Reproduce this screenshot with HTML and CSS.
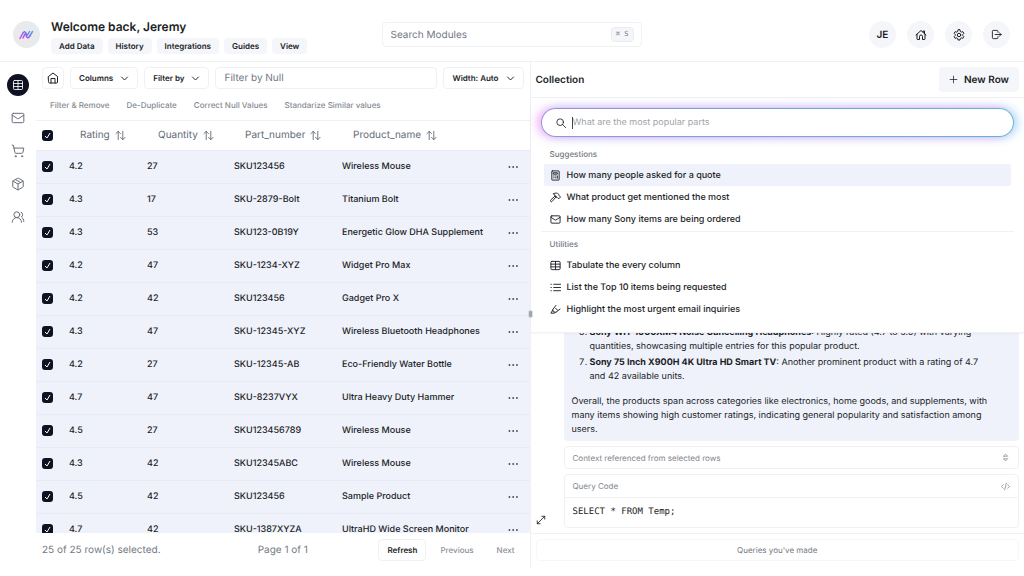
FILE: index.html
```html
<!DOCTYPE html>
<html lang="en">
<head>
<meta charset="utf-8">
<meta name="viewport" content="width=device-width, initial-scale=1">
<title>Collection</title>
<link rel="stylesheet" href="styles.css">
</head>
<body>
<svg class="defs" aria-hidden="true">
  <symbol id="i-table" viewBox="0 0 24 24"><rect x="3" y="3" width="18" height="18" rx="2"/><path d="M3 9h18M3 15h18M12 3v18"/></symbol>
  <symbol id="i-grid" viewBox="0 0 24 24"><rect x="2" y="3" width="20" height="18" rx="2"/><path d="M2 9h20M2 15h20M12 3v18"/></symbol>
  <symbol id="i-mail" viewBox="0 0 24 24"><rect x="2" y="4" width="20" height="16" rx="2"/><path d="m2 7 8.900 6a2 2 0 0 0 2.200 0L22 7"/></symbol>
  <symbol id="i-cart" viewBox="0 0 24 24"><circle cx="8" cy="21" r="1"/><circle cx="19" cy="21" r="1"/><path d="M2 2h2l2.700 12.400a2 2 0 0 0 2 1.600h9.700a2 2 0 0 0 2-1.600L22 7H5"/></symbol>
  <symbol id="i-box" viewBox="0 0 24 24"><path d="M21 8a2 2 0 0 0-1-1.700l-7-4a2 2 0 0 0-2 0l-7 4A2 2 0 0 0 3 8v8a2 2 0 0 0 1 1.700l7 4a2 2 0 0 0 2 0l7-4a2 2 0 0 0 1-1.700ZM3.300 7 12 12l8.700-5M12 22V12M7.500 4.300l9 5.100"/></symbol>
  <symbol id="i-users" viewBox="0 0 24 24"><circle cx="10" cy="8" r="5"/><path d="M2 21a8 8 0 0 1 16 0M22 20c0-3.400-2-6.500-4-8a5 5 0 0 0-.5-8.300"/></symbol>
  <symbol id="i-home" viewBox="0 0 24 24"><path d="m3 9 9-7 9 7v11a2 2 0 0 1-2 2H5a2 2 0 0 1-2-2ZM8 22v-9h8v9"/></symbol>
  <symbol id="i-house" viewBox="0 0 24 24"><path d="M2 12 12 3l10 9M16 6V4h3v5M4 10.500V20a1 1 0 0 0 1 1h4v-6a3 3 0 0 1 6 0v6h4a1 1 0 0 0 1-1v-9.500"/></symbol>
  <symbol id="i-gear" viewBox="0 0 24 24"><path d="m10 2-.7 3-2 1.200-3-.9-2 3.400L4.500 11v2l-2.200 2.300 2 3.400 3-.9 2 1.200.7 3h4l.7-3 2-1.200 3 .9 2-3.400-2.200-2.300v-2l2.200-2.300-2-3.400-3 .9-2-1.200-.7-3Z"/><circle cx="12" cy="12" r="3.500"/></symbol>
  <symbol id="i-exit" viewBox="0 0 24 24"><path d="M15 7V5a2 2 0 0 0-2-2H5a2 2 0 0 0-2 2v14a2 2 0 0 0 2 2h8a2 2 0 0 0 2-2v-2M9 12h13M18 8l4 4-4 4"/></symbol>
  <symbol id="i-down" viewBox="0 0 24 24"><path d="m4 8 8 8 8-8"/></symbol>
  <symbol id="i-sort" viewBox="0 0 24 24"><path d="M7 21V3M2 8l5-5 5 5M17 3v18M12 16l5 5 5-5"/></symbol>
  <symbol id="i-plus" viewBox="0 0 24 24"><path d="M12 3v18M3 12h18"/></symbol>
  <symbol id="i-search" viewBox="0 0 24 24"><circle cx="10" cy="10" r="8"/><path d="m16 16 7 7"/></symbol>
  <symbol id="i-calc" viewBox="0 0 24 24"><rect x="4" y="2" width="16" height="20" rx="1"/><path d="M8 6h8v3H8ZM8 13h1M12 13h1M16 13v5M8 17h1M12 17h1"/></symbol>
  <symbol id="i-hammer" viewBox="0 0 24 24"><path d="m14 10-9.500 10.500a2 2 0 0 1-3-3L12 8M8 4c4-3 8-2 11 1l1 3 3 3-4 4-3-3-3-1-3-3c0-2-1-3-2-4Z"/></symbol>
  <symbol id="i-list" viewBox="0 0 24 24"><path d="M8 5h15M8 12h15M8 19h15M2 5h1M2 12h1M2 19h1"/></symbol>
  <symbol id="i-marker" viewBox="0 0 24 24"><path d="m13 3-7 9 1 5 6 1 9-7M6 13l-4 7h8l2-2M12 9l5 5"/></symbol>
  <symbol id="i-updown" viewBox="0 0 24 24"><path d="m7 8 5-5 5 5ZM7 16l5 5 5-5Z"/></symbol>
  <symbol id="i-code" viewBox="0 0 24 24"><path d="M6 7l-5 5 5 5M18 7l5 5-5 5M14 3l-4 18"/></symbol>
  <symbol id="i-expand" viewBox="0 0 24 24"><path d="M3 21 21 3M14 3h7v7M3 14v7h7"/></symbol>
  <symbol id="i-dots" viewBox="0 0 24 24"><path d="M3 12h1M12 12h1M21 12h1"/></symbol>
</svg>

<header class="topbar">
  <div class="brand">
    <span class="logo">
      <svg viewBox="0 0 30 20" aria-hidden="true">
        <defs><linearGradient id="lg" x1="0" y1="1" x2="1" y2="0"><stop offset="0" stop-color="#e044f0"/><stop offset=".5" stop-color="#8a60e4"/><stop offset="1" stop-color="#48aef0"/></linearGradient></defs>
        <path d="M2 17 8 6q3-5 6 0l1 7q2 5 6 0l6-10M8 16l4-8M17 10l4-7" fill="none" stroke="url(#lg)" stroke-width="3" stroke-linecap="round" stroke-linejoin="round"/>
      </svg>
    </span>
    <div>
      <h1 class="title">Welcome back, Jeremy</h1>
      <nav class="chips">
        <button class="chip">Add Data</button>
        <button class="chip">History</button>
        <button class="chip">Integrations</button>
        <button class="chip">Guides</button>
        <button class="chip">View</button>
      </nav>
    </div>
  </div>
  <div class="modules">
    <input class="modules-input" type="text" aria-label="Search Modules" placeholder="Search Modules">
    <kbd class="kbd">⌘ S</kbd>
  </div>
  <div class="account">
    <button class="round">JE</button>
    <button class="round" aria-label="Home"><svg class="ico s12"><use href="#i-house"/></svg></button>
    <button class="round" aria-label="Settings"><svg class="ico s12"><use href="#i-gear"/></svg></button>
    <button class="round" aria-label="Log out"><svg class="ico s11"><use href="#i-exit"/></svg></button>
  </div>
</header>

<div class="shell">
  <nav class="rail">
    <button class="rail-btn active" aria-label="Tables"><svg class="ico s12"><use href="#i-table"/></svg></button>
    <button class="rail-btn" aria-label="Mail"><svg class="ico s14"><use href="#i-mail"/></svg></button>
    <button class="rail-btn" aria-label="Orders"><svg class="ico s14"><use href="#i-cart"/></svg></button>
    <button class="rail-btn" aria-label="Products"><svg class="ico s14"><use href="#i-box"/></svg></button>
    <button class="rail-btn" aria-label="Contacts"><svg class="ico s14"><use href="#i-users"/></svg></button>
  </nav>

  <main class="data">
    <div class="toolbar">
      <button class="btn square" aria-label="Home"><svg class="ico s12"><use href="#i-home"/></svg></button>
      <button class="btn">Columns <svg class="ico s9"><use href="#i-down"/></svg></button>
      <button class="btn">Filter by <svg class="ico s9"><use href="#i-down"/></svg></button>
      <input class="filter" type="text" aria-label="Filter by Null" placeholder="Filter by Null">
      <button class="btn">Width: Auto <svg class="ico s9"><use href="#i-down"/></svg></button>
    </div>
    <div class="actions">
      <button class="link">Filter &amp; Remove</button>
      <button class="link">De-Duplicate</button>
      <button class="link">Correct Null Values</button>
      <button class="link">Standarize Similar values</button>
    </div>
    <div class="table-wrap">
      <table class="grid">
        <colgroup><col class="c-check"><col class="c-rating"><col class="c-qty"><col class="c-part"><col><col class="c-more"></colgroup>
        <thead>
          <tr>
            <th><input class="check" type="checkbox" checked aria-label="Select all"></th>
            <th><button class="sort">Rating <svg class="ico s11"><use href="#i-sort"/></svg></button></th>
            <th><button class="sort">Quantity <svg class="ico s11"><use href="#i-sort"/></svg></button></th>
            <th><button class="sort">Part_number <svg class="ico s11"><use href="#i-sort"/></svg></button></th>
            <th><button class="sort">Product_name <svg class="ico s11"><use href="#i-sort"/></svg></button></th>
            <th></th>
          </tr>
        </thead>
        <tbody>
          <tr><td><input class="check" type="checkbox" checked aria-label="Select row"></td><td>4.2</td><td>27</td><td>SKU123456</td><td>Wireless Mouse</td><td><button class="more" aria-label="More"><svg class="ico s10"><use href="#i-dots"/></svg></button></td></tr>
          <tr><td><input class="check" type="checkbox" checked aria-label="Select row"></td><td>4.3</td><td>17</td><td>SKU-2879-Bolt</td><td>Titanium Bolt</td><td><button class="more" aria-label="More"><svg class="ico s10"><use href="#i-dots"/></svg></button></td></tr>
          <tr><td><input class="check" type="checkbox" checked aria-label="Select row"></td><td>4.3</td><td>53</td><td>SKU123-0B19Y</td><td>Energetic Glow DHA Supplement</td><td><button class="more" aria-label="More"><svg class="ico s10"><use href="#i-dots"/></svg></button></td></tr>
          <tr><td><input class="check" type="checkbox" checked aria-label="Select row"></td><td>4.2</td><td>47</td><td>SKU-1234-XYZ</td><td>Widget Pro Max</td><td><button class="more" aria-label="More"><svg class="ico s10"><use href="#i-dots"/></svg></button></td></tr>
          <tr><td><input class="check" type="checkbox" checked aria-label="Select row"></td><td>4.2</td><td>42</td><td>SKU123456</td><td>Gadget Pro X</td><td><button class="more" aria-label="More"><svg class="ico s10"><use href="#i-dots"/></svg></button></td></tr>
          <tr><td><input class="check" type="checkbox" checked aria-label="Select row"></td><td>4.3</td><td>47</td><td>SKU-12345-XYZ</td><td>Wireless Bluetooth Headphones</td><td><button class="more" aria-label="More"><svg class="ico s10"><use href="#i-dots"/></svg></button></td></tr>
          <tr><td><input class="check" type="checkbox" checked aria-label="Select row"></td><td>4.2</td><td>27</td><td>SKU-12345-AB</td><td>Eco-Friendly Water Bottle</td><td><button class="more" aria-label="More"><svg class="ico s10"><use href="#i-dots"/></svg></button></td></tr>
          <tr><td><input class="check" type="checkbox" checked aria-label="Select row"></td><td>4.7</td><td>47</td><td>SKU-8237VYX</td><td>Ultra Heavy Duty Hammer</td><td><button class="more" aria-label="More"><svg class="ico s10"><use href="#i-dots"/></svg></button></td></tr>
          <tr><td><input class="check" type="checkbox" checked aria-label="Select row"></td><td>4.5</td><td>27</td><td>SKU123456789</td><td>Wireless Mouse</td><td><button class="more" aria-label="More"><svg class="ico s10"><use href="#i-dots"/></svg></button></td></tr>
          <tr><td><input class="check" type="checkbox" checked aria-label="Select row"></td><td>4.3</td><td>42</td><td>SKU12345ABC</td><td>Wireless Mouse</td><td><button class="more" aria-label="More"><svg class="ico s10"><use href="#i-dots"/></svg></button></td></tr>
          <tr><td><input class="check" type="checkbox" checked aria-label="Select row"></td><td>4.5</td><td>42</td><td>SKU123456</td><td>Sample Product</td><td><button class="more" aria-label="More"><svg class="ico s10"><use href="#i-dots"/></svg></button></td></tr>
          <tr><td><input class="check" type="checkbox" checked aria-label="Select row"></td><td>4.7</td><td>42</td><td>SKU-1387XYZA</td><td>UltraHD Wide Screen Monitor</td><td><button class="more" aria-label="More"><svg class="ico s10"><use href="#i-dots"/></svg></button></td></tr>
        </tbody>
      </table>
    </div>
    <footer class="pager">
      <span class="selected">25 of 25 row(s) selected.</span>
      <span class="page">Page 1 of 1</span>
      <div class="pager-btns">
        <button class="btn">Refresh</button>
        <button class="btn faded">Previous</button>
        <button class="btn faded">Next</button>
      </div>
    </footer>
  </main>

  <aside class="side">
    <span class="handle"></span>
    <div class="side-head">
      <h2 class="side-title">Collection</h2>
      <button class="new-row"><svg class="ico s9"><use href="#i-plus"/></svg> New Row</button>
    </div>
    <div class="side-body">
      <div class="chat">
        <button class="expand" aria-label="Expand"><svg class="ico s10"><use href="#i-expand"/></svg></button>
        <div class="answers">
          <div class="answer">
            <ol class="points" start="6">
              <li><b>Sony WH-1000XM4 Noise Cancelling Headphones</b>: Highly rated (4.7 to 5.0) with varying quantities, showcasing multiple entries for this popular product.</li>
              <li><b>Sony 75 Inch X900H 4K Ultra HD Smart TV</b>: Another prominent product with a rating of 4.7 and 42 available units.</li>
            </ol>
            <p class="summary">Overall, the products span across categories like electronics, home goods, and supplements, with many items showing high customer ratings, indicating general popularity and satisfaction among users.</p>
          </div>
          <button class="card card-row">Context referenced from selected rows <svg class="ico s9"><use href="#i-updown"/></svg></button>
          <div class="card">
            <div class="card-row code-head">Query Code <svg class="ico s9"><use href="#i-code"/></svg></div>
            <pre class="code">SELECT * FROM Temp;</pre>
          </div>
        </div>
      </div>
      <section class="palette">
        <label class="ask">
          <svg class="ico s10"><use href="#i-search"/></svg>
          <input class="ask-input" type="text" aria-label="Ask a question" placeholder="What are the most popular parts">
        </label>
        <div class="group">
          <h3 class="group-title">Suggestions</h3>
          <button class="item current"><svg class="ico s11"><use href="#i-calc"/></svg>How many people asked for a quote</button>
          <button class="item"><svg class="ico s11"><use href="#i-hammer"/></svg>What product get mentioned the most</button>
          <button class="item"><svg class="ico s11"><use href="#i-mail"/></svg>How many Sony items are being ordered</button>
        </div>
        <div class="group">
          <h3 class="group-title">Utilities</h3>
          <button class="item"><svg class="ico s11"><use href="#i-grid"/></svg>Tabulate the every column</button>
          <button class="item"><svg class="ico s11"><use href="#i-list"/></svg>List the Top 10 items being requested</button>
          <button class="item"><svg class="ico s11"><use href="#i-marker"/></svg>Highlight the most urgent email inquiries</button>
        </div>
      </section>
    </div>
    <div class="side-foot">
      <button class="queries">Queries you've made</button>
    </div>
  </aside>
</div>
</body>
</html>
```

FILE: styles.css
```css
:root {
  --ink: #1b1d25;
  --muted: #737983;
  --line: #eff1f3;
  --tint: #eff2fb;
  --soft: #f4f6fa;
}

* { box-sizing: border-box; }

body {
  margin: 0;
  height: 100vh;
  padding-bottom: 8px;
  display: flex;
  flex-direction: column;
  overflow: hidden;
  background: #fff;
  color: var(--ink);
  font-family: Inter, "Liberation Sans", sans-serif;
  font-size: 10px;
  text-rendering: geometricPrecision;
}

h1, h2, h3, p, ol, pre { margin: 0; padding: 0; }
button, input { font: inherit; color: inherit; text-rendering: inherit; }
button { border: 0; background: none; padding: 0; white-space: nowrap; }
input { min-width: 0; outline: 0; }
input::placeholder { color: var(--muted); opacity: 1; }

.defs { display: none; }

.ico {
  flex: none;
  fill: none;
  stroke: currentColor;
  stroke-width: 2;
  stroke-linecap: round;
  stroke-linejoin: round;
}
.s9 { width: 9px; height: 9px; }
.s10 { width: 10px; height: 10px; }
.s11 { width: 11px; height: 11px; }
.s12 { width: 12px; height: 12px; }
.s14 { width: 14px; height: 14px; }

/* Top bar */
.topbar {
  flex: none;
  display: grid;
  grid-template-columns: 1fr 260px 1fr;
  align-items: center;
  padding: 8px 14px 0 13px;
  height: 62px;
  border-bottom: 1px solid var(--line);
}
.brand { display: flex; align-items: center; gap: 11px; }
.logo {
  display: grid;
  place-items: center;
  width: 27px;
  height: 27px;
  border-radius: 50%;
  background: #e8eaeb;
}
.logo svg { width: 15px; height: 10px; }
.title { padding-top: 2px; font-size: 12px; line-height: 18px; font-weight: 600; }
.chips { display: flex; gap: 5px; padding-top: 2px; }
.chip {
  height: 16px;
  padding: 0 8px;
  border-radius: 4px;
  background: var(--soft);
  font-size: 8px;
  font-weight: 600;
}
.modules {
  display: flex;
  align-items: center;
  height: 25px;
  padding: 0 7px 0 8px;
  border: 1px solid var(--line);
  border-radius: 4px;
}
.modules-input { flex: 1; border: 0; padding: 0; background: none; }
.kbd {
  padding: 0 4px;
  border: 1px solid #e9edf0;
  border-radius: 4px;
  background: var(--soft);
  color: var(--muted);
  font: 7px/13px "DejaVu Sans Mono", monospace;
}
.account { display: flex; justify-content: flex-end; gap: 11px; }
.round {
  display: grid;
  place-items: center;
  width: 27px;
  height: 27px;
  border-radius: 50%;
  background: var(--soft);
  font-weight: 600;
}

.shell { flex: 1; min-height: 0; display: flex; }

/* Icon rail */
.rail {
  flex: none;
  width: 36px;
  display: flex;
  flex-direction: column;
  align-items: center;
  gap: 11px;
  padding-top: 12px;
  color: #666b75;
}
.rail-btn {
  display: grid;
  place-items: center;
  width: 22px;
  height: 22px;
  border-radius: 50%;
}
.rail-btn .ico { stroke-width: 1.7; }
.active { background: #0e1222; color: #fff; }

/* Data panel */
.data { flex: 1; min-width: 0; display: flex; flex-direction: column; }
.toolbar { display: flex; gap: 6px; padding: 5px 6px 0; }
.btn {
  display: flex;
  align-items: center;
  justify-content: center;
  gap: 7px;
  height: 22px;
  padding: 0 8px;
  border: 1px solid var(--line);
  border-radius: 4px;
  font-size: 8px;
  font-weight: 600;
}
.btn .ico { stroke-width: 2.5; }
.square { width: 22px; padding: 0; }
.square .ico { stroke-width: 2; }
.filter {
  flex: 1;
  height: 22px;
  padding: 0 8px;
  border: 1px solid var(--line);
  border-radius: 4px;
}
.actions {
  display: flex;
  align-items: center;
  gap: 17px;
  height: 32px;
  padding: 0 14px;
  border-bottom: 1px solid var(--line);
}
.link { color: #858a92; font-size: 8px; font-weight: 500; }

.table-wrap { flex: 1; min-height: 0; overflow: hidden; }
.grid { width: 100%; table-layout: fixed; border-collapse: collapse; }
.c-check { width: 27px; }
.c-rating { width: 78px; }
.c-qty { width: 87px; }
.c-part { width: 108px; }
.c-more { width: 28px; }
.grid th {
  height: 29px;
  padding: 0 0 0 6px;
  text-align: left;
  font-weight: 400;
  color: #656b76;
}
.grid td {
  height: 33px;
  padding: 0 0 0 6px;
  border-top: 1px solid #e8ebf3;
  background: var(--tint);
  font-size: 9px;
  font-weight: 500;
  white-space: nowrap;
}
.sort { display: flex; align-items: center; gap: 5px; padding-left: 11px; }
.more { display: flex; }
.more .ico { stroke-width: 3.5; }
.check {
  display: block;
  appearance: none;
  width: 11px;
  height: 11px;
  margin: 0;
  border-radius: 3px;
  background: #0e1222 url("data:image/svg+xml,%3Csvg xmlns='http://www.w3.org/2000/svg' viewBox='0 0 11 11'%3E%3Cpath d='M3 6l2 2 3-5' fill='none' stroke='%23fff'/%3E%3C/svg%3E");
}

.pager {
  flex: none;
  display: grid;
  grid-template-columns: 1fr auto 1fr;
  align-items: center;
  height: 35px;
  padding: 0 6px 2px;
  color: var(--muted);
}
.pager-btns { display: flex; justify-content: flex-end; gap: 5px; color: var(--ink); }
.faded { border-color: transparent; color: #8b9098; font-weight: 500; }

/* Side panel */
.side {
  flex: 1;
  min-width: 0;
  position: relative;
  display: flex;
  flex-direction: column;
  border-left: 1px solid var(--line);
}
.handle {
  position: absolute;
  left: -3px;
  top: 49%;
  z-index: 2;
  width: 5px;
  height: 8px;
  border-radius: 2px;
  border: 1px solid #dcdfe3;
  background: #a3a7ad;
}
.side-head {
  flex: none;
  display: flex;
  align-items: center;
  justify-content: space-between;
  height: 36px;
  padding: 0 5px;
  border-bottom: 1px solid var(--line);
}
.side-title { font-size: 10px; font-weight: 600; }
.new-row {
  display: flex;
  align-items: center;
  gap: 6px;
  height: 25px;
  padding: 0 10px;
  border-radius: 4px;
  background: var(--soft);
  font-weight: 600;
}
.side-body { flex: 1; min-height: 0; position: relative; }

.palette {
  position: absolute;
  inset: 0 0 auto;
  padding: 10px 10px 11px;
  background: #fff;
  border-bottom: 1px solid var(--line);
  box-shadow: 0 1px 2px rgba(20, 30, 60, .04);
}
.ask {
  display: flex;
  align-items: center;
  gap: 6px;
  height: 29px;
  padding: 0 14px;
  border: 1px solid transparent;
  border-radius: 15px;
  background:
    linear-gradient(#fff, #fff) padding-box,
    linear-gradient(90deg, #a08ed8, #7b9fdc 40%, #63b4d4) border-box;
  box-shadow: -4px 0 10px rgba(235, 110, 245, .5), 4px 0 10px rgba(90, 190, 245, .45);
}
.ask-input {
  flex: 1;
  height: 14px;
  border: 0;
  padding: 0 1px;
  background: linear-gradient(#444, #444) left center / 1px 12px no-repeat;
  font-size: 9px;
}
.ask-input::placeholder { color: #a0a3a9; }
.group { padding: 9px 3px 1px; }
.group + .group { border-top: 1px solid var(--line); padding-top: 4px; }
.group-title {
  padding: 0 0 2px 6px;
  color: var(--muted);
  font-size: 8px;
  line-height: 16px;
  font-weight: 500;
}
.item {
  display: flex;
  align-items: center;
  gap: 6px;
  width: 100%;
  height: 22px;
  padding: 0 6px;
  border-radius: 2px;
  font-size: 9px;
  font-weight: 500;
}
.current { background: var(--tint); }

.chat {
  display: flex;
  align-items: flex-end;
  gap: 18px;
  height: 100%;
  padding: 0 5px 5px;
  overflow: hidden;
}
.answers { flex: 1; min-width: 0; display: flex; flex-direction: column; gap: 5px; }
.answer {
  padding: 7px 16px 4px 8px;
  border-radius: 4px;
  background: var(--tint);
  font-size: 9px;
  line-height: 14px;
}
.points { padding: 0 12px 0 18px; }
.points li + li { margin-top: 2px; }
.summary { padding-top: 11px; }
.card { border: 1px solid var(--line); border-radius: 4px; background: #fff; }
.card-row {
  display: flex;
  align-items: center;
  justify-content: space-between;
  height: 23px;
  padding: 0 8px;
  color: #80858d;
  font-size: 8px;
}
.code-head { border-bottom: 1px solid var(--line); }
.code { padding: 8px 8px 9px; font: 9px/12px "DejaVu Sans Mono", monospace; }
.side-foot { flex: none; height: 35px; padding: 5px 5px; border-top: 1px solid var(--line); }
.queries {
  width: 100%;
  height: 22px;
  border: 1px solid #f5f7f9;
  border-radius: 4px;
  color: var(--muted);
  font-size: 8px;
}
```
